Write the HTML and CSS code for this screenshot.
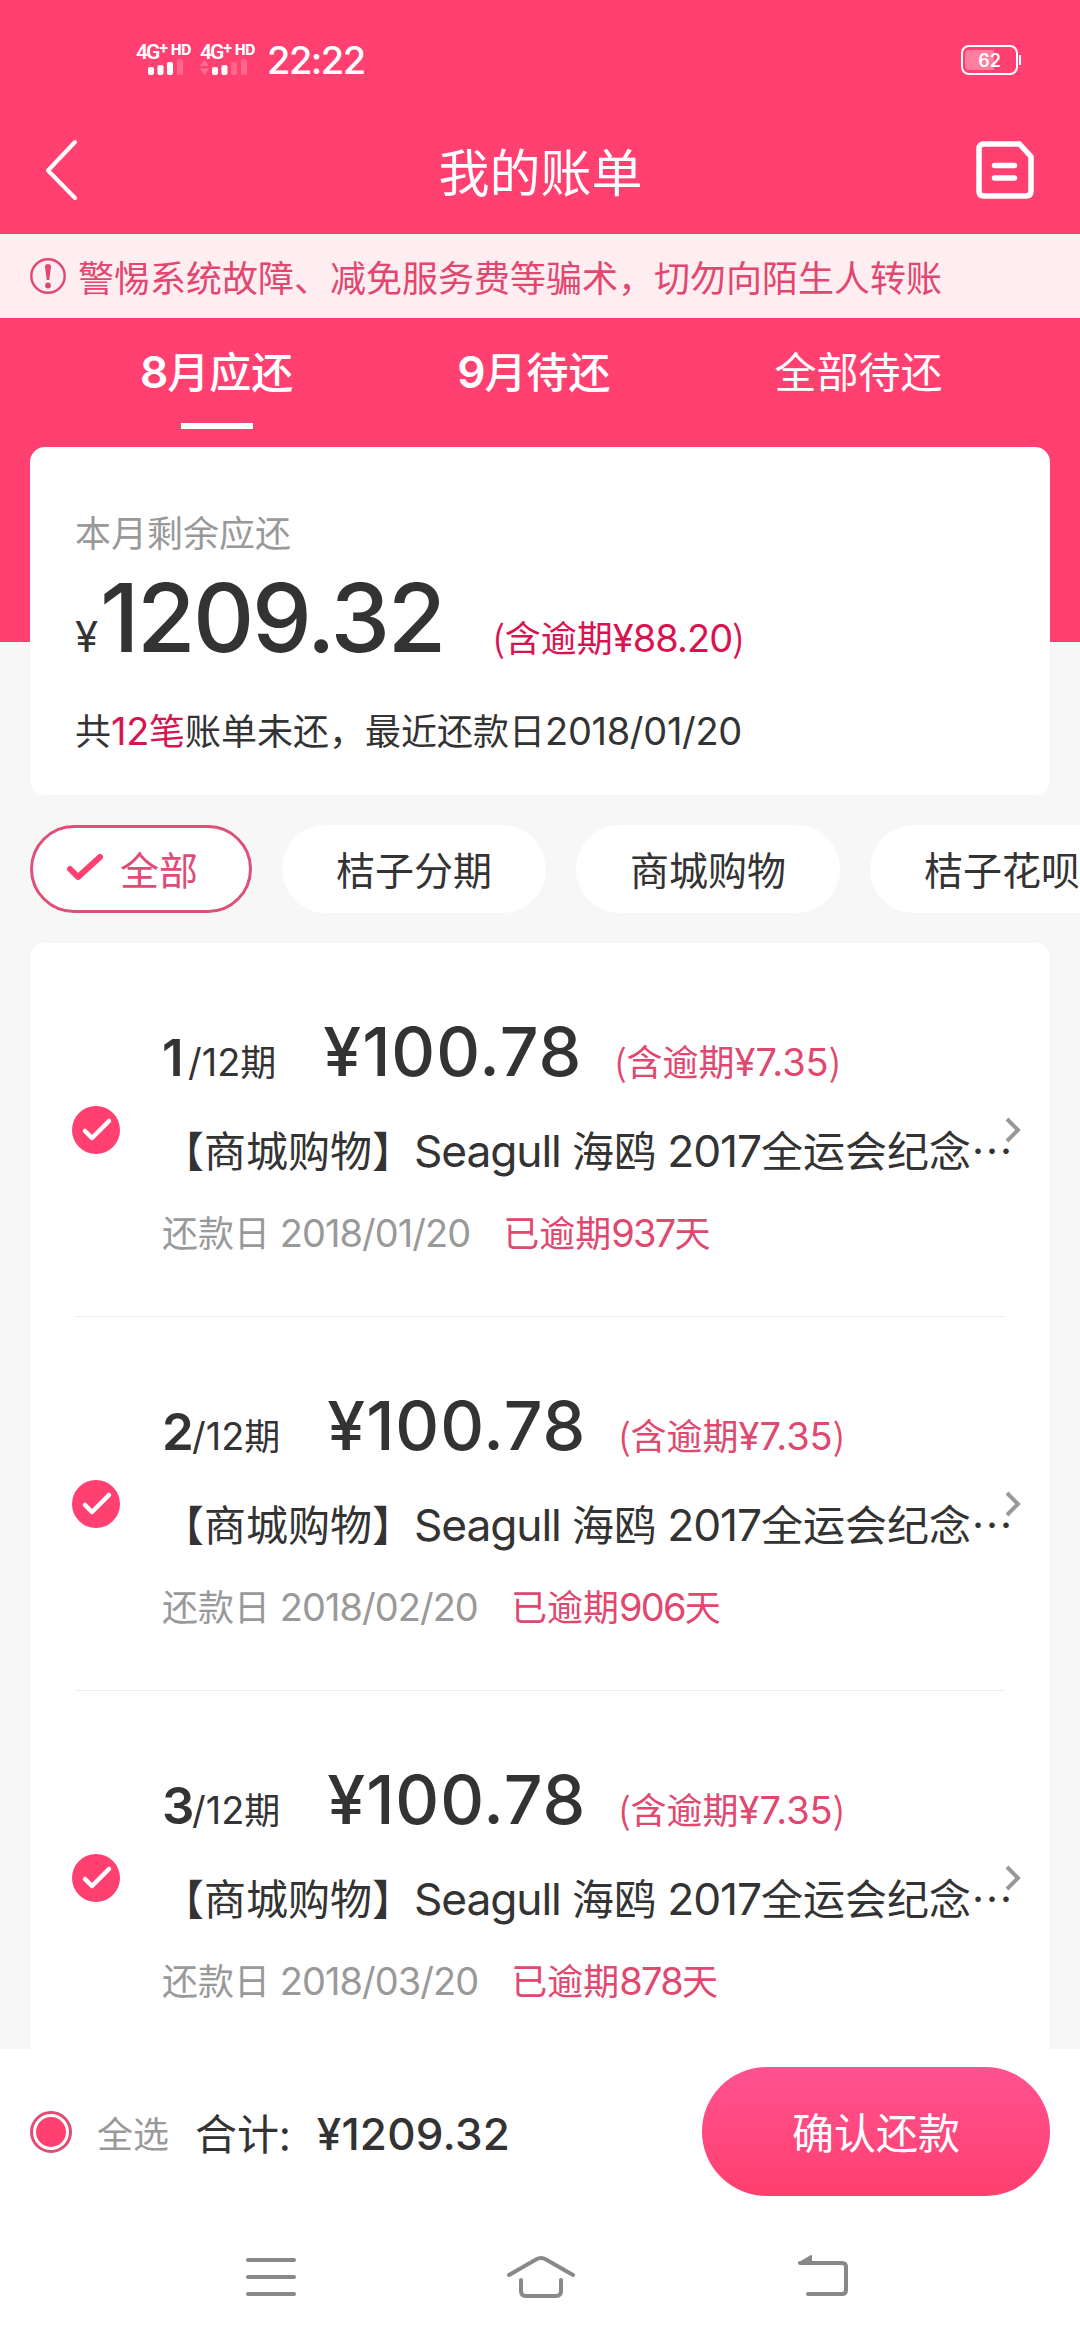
FILE: index.html
```html
<!DOCTYPE html>
<html lang="zh-CN">
<head>
<meta charset="utf-8">
<title>我的账单</title>
<link rel="stylesheet" href="styles.css">
</head>
<body>
<div class="screen">
  <header class="top">
    <div class="status">
      <div class="signal">
        <div class="net"><span class="gen">4G<sup>+</sup></span><b>HD</b></div>
        <svg class="bars" width="58" height="18" viewBox="0 0 58 18" fill="#fff"><rect x="12" y="9" width="6" height="8" rx="2"/><rect x="21.500" y="7" width="6" height="10" rx="2"/><rect x="31" y="4" width="6" height="13" rx="2"/><rect x="41" y="1" width="6" height="16" rx="2" opacity=".2"/></svg>
      </div>
      <div class="signal">
        <div class="net"><span class="gen">4G<sup>+</sup></span><b>HD</b></div>
        <svg class="bars" width="58" height="18" viewBox="0 0 58 18" fill="#fff"><path d="M0 8l4.500-6 4.500 6zM0 10.500h9l-4.500 6.500z" opacity=".25"/><rect x="12" y="9" width="6" height="8" rx="2"/><rect x="21.500" y="7" width="6" height="10" rx="2"/><rect x="31" y="4" width="6" height="13" rx="2" opacity=".2"/><rect x="41" y="1" width="6" height="16" rx="2" opacity=".2"/></svg>
      </div>
      <div class="clock">22:22</div>
      <div class="battery"><span>62</span></div>
    </div>
    <nav class="titlebar">
      <svg width="36" height="64" viewBox="0 0 36 64" fill="none" stroke="#fff" stroke-width="4" stroke-linecap="round" stroke-linejoin="round"><path d="M32 4L5 32.500 32 60"/></svg>
      <h1>我的账单</h1>
      <svg width="60" height="60" viewBox="0 0 60 60" fill="none" stroke="#fff" stroke-width="5.500" stroke-linecap="round" stroke-linejoin="round"><path d="M9 4h35.500L56 16.500V51q0 5-5 5H9q-5 0-5-5V9q0-5 5-5z"/><path d="M19.500 25.500h20M19.500 38h20"/></svg>
    </nav>
  </header>

  <div class="notice">
    <svg width="36" height="36" viewBox="0 0 36 36"><circle cx="18" cy="18" r="16.700" fill="none" stroke="#e2476f" stroke-width="2.400"/><path d="M15 8.500q0-2.500 3-2.500t3 2.500L19.300 22h-2.600z" fill="#e2476f"/><circle cx="18" cy="27.500" r="2.900" fill="#e2476f"/></svg>
    <span>警惕系统故障、减免服务费等骗术，切勿向陌生人转账</span>
  </div>

  <div class="hero">
    <div class="tabs">
      <div class="tab active"><i>8</i>月应还</div>
      <div class="tab strong"><i>9</i>月待还</div>
      <div class="tab">全部待还</div>
    </div>
    <section class="summary">
      <div class="label">本月剩余应还</div>
      <div class="total"><span class="yen">¥</span><span class="sum">1209.32</span><span class="late">(含逾期<i>¥88.20</i>)</span></div>
      <div class="info">共<em><i>12</i>笔</em>账单未还，最近还款日<i>2018/01/20</i></div>
    </section>
  </div>

  <div class="chips">
    <div class="chip selected"><svg width="38" height="30" viewBox="0 0 38 30" fill="none" stroke="#ff4070" stroke-width="6" stroke-linecap="round" stroke-linejoin="round"><path d="M4 16l8 8L34 4"/></svg>全部</div>
    <div class="chip">桔子分期</div>
    <div class="chip">商城购物</div>
    <div class="chip">桔子花呗</div>
  </div>

  <main class="list">
    <article class="bill">
      <svg class="tick" width="48" height="48" viewBox="0 0 48 48"><circle cx="24" cy="24" r="24" fill="#ff4070"/><path d="M13 25l7 7 17-17" fill="none" stroke="#fff" stroke-width="4.500" stroke-linecap="round" stroke-linejoin="round"/></svg>
      <div class="detail">
        <div class="row"><span class="no">1</span><span class="term"><i>/12</i>期</span><span class="price">¥100.78</span><span class="fee">(含逾期<i>¥7.35</i>)</span></div>
        <div class="name">【商城购物】<i>Seagull </i>海鸥<i> 2017</i>全运会纪念…</div>
        <div class="due">还款日<i> 2018/01/20</i><em>已逾期<i>937</i>天</em></div>
      </div>
      <svg class="arrow" width="18" height="28" viewBox="0 0 18 28" fill="none" stroke="#999" stroke-width="4"><path d="M3 3l11 11L3 25"/></svg>
    </article>
    <article class="bill">
      <svg class="tick" width="48" height="48" viewBox="0 0 48 48"><circle cx="24" cy="24" r="24" fill="#ff4070"/><path d="M13 25l7 7 17-17" fill="none" stroke="#fff" stroke-width="4.500" stroke-linecap="round" stroke-linejoin="round"/></svg>
      <div class="detail">
        <div class="row"><span class="no">2</span><span class="term"><i>/12</i>期</span><span class="price">¥100.78</span><span class="fee">(含逾期<i>¥7.35</i>)</span></div>
        <div class="name">【商城购物】<i>Seagull </i>海鸥<i> 2017</i>全运会纪念…</div>
        <div class="due">还款日<i> 2018/02/20</i><em>已逾期<i>906</i>天</em></div>
      </div>
      <svg class="arrow" width="18" height="28" viewBox="0 0 18 28" fill="none" stroke="#999" stroke-width="4"><path d="M3 3l11 11L3 25"/></svg>
    </article>
    <article class="bill">
      <svg class="tick" width="48" height="48" viewBox="0 0 48 48"><circle cx="24" cy="24" r="24" fill="#ff4070"/><path d="M13 25l7 7 17-17" fill="none" stroke="#fff" stroke-width="4.500" stroke-linecap="round" stroke-linejoin="round"/></svg>
      <div class="detail">
        <div class="row"><span class="no">3</span><span class="term"><i>/12</i>期</span><span class="price">¥100.78</span><span class="fee">(含逾期<i>¥7.35</i>)</span></div>
        <div class="name">【商城购物】<i>Seagull </i>海鸥<i> 2017</i>全运会纪念…</div>
        <div class="due">还款日<i> 2018/03/20</i><em>已逾期<i>878</i>天</em></div>
      </div>
      <svg class="arrow" width="18" height="28" viewBox="0 0 18 28" fill="none" stroke="#999" stroke-width="4"><path d="M3 3l11 11L3 25"/></svg>
    </article>
  </main>

  <footer class="paybar">
    <svg width="42" height="42" viewBox="0 0 42 42"><circle cx="21" cy="21" r="19.500" fill="none" stroke="#e04c74" stroke-width="3"/><circle cx="21" cy="21" r="15" fill="#ff4070"/></svg>
    <span class="all">全选</span>
    <span class="sumlabel">合计<b>:</b></span>
    <span class="grand">¥1209.32</span>
    <button class="pay">确认还款</button>
  </footer>

  <div class="sysnav">
    <svg width="54" height="44" viewBox="0 0 54 44" fill="none" stroke="#888" stroke-width="4" stroke-linecap="round"><path d="M4 5h46M4 22h46M4 39h46"/></svg>
    <svg class="home" width="72" height="48" viewBox="0 0 72 48" fill="none" stroke="#888" stroke-width="4" stroke-linecap="round" stroke-linejoin="round"><path d="M4 23L31 7.500q5-3 10 0L68 23M16 28v11q0 5 5 5h30q5 0 5-5V28"/></svg>
    <svg class="back" width="54" height="44" viewBox="0 0 54 44" fill="none" stroke="#888" stroke-width="4" stroke-linecap="round" stroke-linejoin="round"><path d="M4 8h42q4 0 4 4v23q0 4-4 4H12"/><path d="M3 8L15 1v7z" fill="#888" stroke-width="2"/></svg>
  </div>
</div>
</body>
</html>
```

FILE: styles.css
```css
* { box-sizing: border-box; margin: 0; padding: 0; }
body {
  width: 1080px;
  height: 2340px;
  overflow: hidden;
  background: #fff;
  color: #333;
  font-family: "Noto Sans CJK SC", sans-serif;
  font-size: 36px;
}
svg { display: block; flex: none; }
i { font-family: Inter, sans-serif; font-style: normal; font-size: 1.055em; letter-spacing: -.025em; line-height: 0; }
em { font-style: normal; }
.screen { width: 1080px; height: 2340px; display: flex; flex-direction: column; background: #f7f7f7; white-space: nowrap; }

.top { flex: none; height: 234px; background: #ff4070; color: #fff; }
.status { height: 108px; padding: 44px 60px 0 136px; display: flex; align-items: flex-start; font-family: Inter, sans-serif; }
.signal { width: 64px; height: 32px; display: flex; flex-direction: column; }
.net { display: flex; height: 14px; line-height: 16px; align-items: flex-start; }
.gen { width: 35px; font: 600 21px/17px Roboto, sans-serif; letter-spacing: -2px; }
.gen sup { font-size: 16px; line-height: 0; vertical-align: 5px; margin-left: 1px; }
.net b { font: 800 14px/12px Inter, sans-serif; letter-spacing: -.2px; }
.clock { margin-left: 3px; font-size: 38px; font-weight: 500; line-height: 32px; letter-spacing: -1.500px; }
.battery { position: relative; margin: 1px 2px 0 auto; width: 57px; height: 30px; border: 2px solid #fff; border-radius: 8px; padding: 3px 2px; }
.battery::before { content: ""; display: block; width: 29px; height: 20px; border-radius: 4px 0 0 4px; background: rgba(255,255,255,.32); }
.battery::after { content: ""; position: absolute; right: -5px; top: 8px; width: 2px; height: 10px; background: #fff; }
.battery span { position: absolute; inset: 0; text-align: center; font-size: 18px; font-weight: 600; line-height: 27px; }
.titlebar { height: 126px; padding: 0 45px 2px 43px; display: flex; align-items: center; justify-content: space-between; }
.titlebar h1 { font-size: 51px; font-weight: 400; line-height: 60px; margin-left: 27px; }

.notice { flex: none; height: 84px; padding: 0 30px; display: flex; align-items: center; gap: 12px; background: #ffeef1; color: #e2476f; line-height: 82px; }

.hero { flex: none; height: 477px; padding: 0 30px; background: linear-gradient(#ff4070 324px, #f7f7f7 324px); }
.tabs { height: 129px; display: flex; gap: 164px; padding: 24px 0 0 110px; color: #fff; font-size: 42px; line-height: 56px; }
.tab { position: relative; }
.tab i { font-weight: 600; }
.strong, .active { font-weight: 500; }
.active::after { content: ""; position: absolute; left: 50%; margin-left: -36px; top: 81px; width: 72px; height: 6px; background: #fff; }
.summary { height: 348px; padding: 59px 45px 0; border-radius: 15px; background: #fff; }
.label { color: #999; line-height: 50px; }
.total { display: flex; align-items: baseline; height: 118px; line-height: 124px; font-family: Inter, sans-serif; }
.yen { font-size: 42px; line-height: 0; }
.sum { margin-left: 2px; font-size: 95px; font-weight: 550; letter-spacing: -2.500px; }
.late { margin-left: 49px; color: #d91350; font-family: "Noto Sans CJK SC", sans-serif; line-height: 0; }
.info { margin-top: 30px; line-height: 50px; }
.info i { letter-spacing: -.008em; }
.info em { color: #d91350; }

.chips { flex: none; height: 148px; padding: 30px 0 30px 30px; display: flex; gap: 30px; overflow: hidden; }
.chip { flex: none; width: 264px; height: 88px; padding-bottom: 2px; border-radius: 44px; background: #fff; display: flex; align-items: center; justify-content: center; font-size: 39px; line-height: 86px; }
.selected { width: 222px; gap: 16px; padding-right: 18px; border: 3px solid #de5077; color: #de4c75; }

.list { flex: 1; min-height: 0; margin: 0 30px; padding: 0 30px 0 42px; border-radius: 15px 15px 0 0; background: #fff; overflow: hidden; }
.bill { height: 374px; display: flex; align-items: center; position: relative; }
.bill::after { content: ""; position: absolute; left: 3px; right: 15px; bottom: 0; height: 1px; background: #ececec; }
.detail { flex: none; width: 842px; margin-left: 42px; height: 374px; padding-top: 65px; }
.row { height: 86px; display: flex; align-items: baseline; line-height: 86px; }
.no { min-width: 26px; max-width: 30px; font: 600 51px/86px Inter, sans-serif; }
.price { margin-left: 47px; font: 550 68px/86px Inter, sans-serif; letter-spacing: 1px; }
.fee { margin-left: 32px; color: #e0486f; line-height: 0; }
.row i { letter-spacing: 0; }
.name { height: 60px; line-height: 60px; margin-top: 25px; font-size: 42px; white-space: pre; }
.due { height: 50px; line-height: 50px; margin-top: 27px; color: #999; white-space: pre; }
.due em { margin-left: 33px; color: #e0486f; }
.due em i { letter-spacing: -.045em; }

.paybar { flex: none; height: 165px; padding: 18px 30px; display: flex; align-items: center; background: #fff; }
.all { margin-left: 25px; color: #999; }
.sumlabel { margin-left: 26px; font-size: 42px; }
.sumlabel b { font-weight: 400; }
.grand { margin-left: 26px; padding-top: 5px; font: 550 44px/60px Inter, sans-serif; letter-spacing: .2px; }
.pay { margin-left: auto; width: 348px; height: 129px; border: 0; border-radius: 65px; background: linear-gradient(#ff5291, #ff3f6e); color: #fff; font: 400 42px/127px "Noto Sans CJK SC", sans-serif; padding-bottom: 2px; }
.sysnav { flex: none; height: 126px; padding: 41px 0 0 244px; background: #fff; display: flex; }
.home { margin: -3px 0 0 207px; }
.back { margin-left: 219px; }
```
